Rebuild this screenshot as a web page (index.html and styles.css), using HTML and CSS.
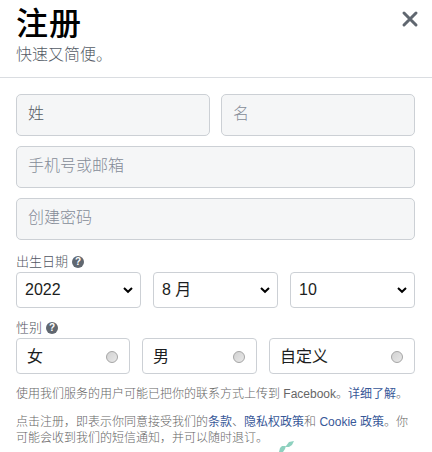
FILE: index.html
```
<!DOCTYPE html>
<html lang="zh-CN">
<head>
    <meta charset="UTF-8">
    <meta name="viewport" content="width=device-width, initial-scale=1.0">
    <title>注册</title>
    <link rel="stylesheet" href="styles.css">
</head>
<body>
    <div class="dialog">
        <header class="header">
            <div>
                <h1>注册</h1>
                <p class="subtitle">快速又简便。</p>
            </div>
            <button class="close" type="button" aria-label="关闭">
                <svg width="18" height="18" viewBox="0 0 18 18"><path d="M3 3 15 15M15 3 3 15"/></svg>
            </button>
        </header>
        <form class="form">
            <div class="names">
                <input class="field focused" type="text" placeholder="姓">
                <input class="field" type="text" placeholder="名">
            </div>
            <input class="field" type="text" placeholder="手机号或邮箱">
            <input class="field" type="password" placeholder="创建密码">

            <div class="label birthday">出生日期 <span class="help">?</span></div>
            <div class="selects">
                <div class="select">2022<svg width="12" height="8" viewBox="0 0 12 8"><path d="M2 2 6 5.800 10 2"/></svg></div>
                <div class="select">8 月<svg width="12" height="8" viewBox="0 0 12 8"><path d="M2 2 6 5.800 10 2"/></svg></div>
                <div class="select">10<svg width="12" height="8" viewBox="0 0 12 8"><path d="M2 2 6 5.800 10 2"/></svg></div>
            </div>

            <div class="label gender">性别 <span class="help">?</span></div>
            <div class="options">
                <label class="option">女<input type="radio" name="sex"></label>
                <label class="option">男<input type="radio" name="sex"></label>
                <label class="option">自定义<input type="radio" name="sex"></label>
            </div>

            <p class="terms">使用我们服务的用户可能已把你的联系方式上传到 <span class="latin">Facebook</span>。<a>详细了解</a>。</p>
            <p class="terms">点击注册，即表示你同意接受我们的<a>条款</a>、<a>隐私权政策</a>和 <a><span class="latin">Cookie</span> 政策</a>。你<br>可能会收到我们的短信通知，并可以随时退订。</p>
        </form>
        <svg class="mark" width="16" height="12" viewBox="0 0 16 12"><path d="M7 5 10 1 15 0 13 4 10 6 7 6ZM0 11 1 7 3 5H7L6 8 4 11Z"/></svg>
    </div>
</body>
</html>
```

FILE: styles.css
```
* { box-sizing: border-box; margin: 0; padding: 0; }
body { background: #fff; color: #1c1e21; font-family: "Liberation Sans", "Noto Sans CJK SC", sans-serif; overflow: hidden; }

.dialog { position: relative; width: 432px; height: 452px; overflow: hidden; }
.header { display: flex; justify-content: space-between; height: 78px; padding: 5px 13px 0 16px; border-bottom: 1px solid #dadde1; }
h1 { font-size: 32px; line-height: 38px; font-weight: 500; letter-spacing: 1px; color: #000; }
.subtitle { font-size: 16px; line-height: 24px; font-weight: 300; color: #555c66; }
.close { width: 18px; height: 18px; margin-top: 5px; border: 0; background: none; }
.close svg { display: block; fill: none; stroke: #606770; stroke-width: 3; stroke-linecap: round; }

.form { padding: 16px 17px 0 16px; }
.names { display: grid; grid-template-columns: 1fr 1fr; gap: 11px; }
.field { display: block; width: 100%; height: 42px; margin-bottom: 10px; padding: 0 11px 3px; border: 1px solid #ccd0d5; border-radius: 5px; background: #f5f6f7; font: 300 16px "Liberation Sans", "Noto Sans CJK SC", sans-serif; }
.field::placeholder { color: #858c97; }
.focused::placeholder { color: #555c66; }

.label { display: flex; align-items: center; gap: 4px; height: 20px; font-size: 13px; line-height: 20px; font-weight: 300; color: #4f5661; }
.birthday { margin-top: 12px; }
.gender { margin-top: 10px; }
.help { width: 12px; height: 12px; border-radius: 50%; background: #606770; color: #fff; font: bold 10px/12px "Liberation Sans", sans-serif; text-align: center; }

.selects { display: grid; grid-template-columns: 125px 125px 125px; gap: 12px; }
.select { display: flex; align-items: center; justify-content: space-between; height: 36px; padding: 0 6px 0 8px; border: 1px solid #ccd0d5; border-radius: 4px; font-size: 16px; line-height: 34px; }
.select svg { fill: none; stroke: #000; stroke-width: 2; }

.options { display: grid; grid-template-columns: 114px 115px 146px; gap: 12px; margin-bottom: 12px; }
.option { display: flex; align-items: center; justify-content: space-between; height: 36px; padding: 1px 11px 0 10px; border: 1px solid #ccd0d5; border-radius: 4px; font-size: 16px; line-height: 34px; }
.option input { appearance: none; width: 12px; height: 12px; border: 1px solid #a5a5a5; border-radius: 50%; background: linear-gradient(135deg, #d2d2d2, #e8e8e8); }

.terms { margin-bottom: 12px; font-size: 12px; line-height: 16px; font-weight: 300; color: #666; white-space: nowrap; }
.terms a { color: #385898; font-weight: 400; }

.mark { position: absolute; left: 279px; top: 441px; fill: #8ed1bf; }
```
